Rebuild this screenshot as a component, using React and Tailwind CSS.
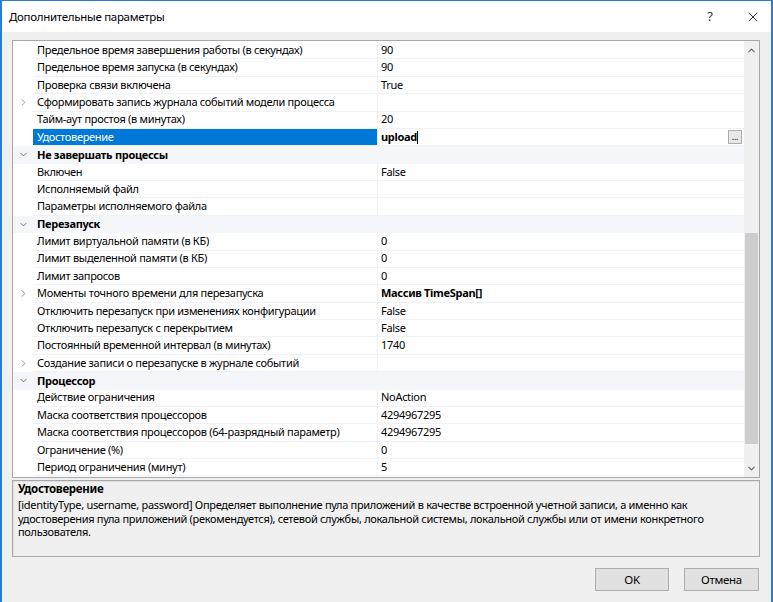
import { ChevronRight, ChevronDown, ChevronUp, X } from 'lucide-react';

const rows = [
  { name: 'Предельное время завершения работы (в секундах)', value: '90' },
  { name: 'Предельное время запуска (в секундах)', value: '90' },
  { name: 'Проверка связи включена', value: 'True' },
  { name: 'Сформировать запись журнала событий модели процесса', value: '', expand: true },
  { name: 'Тайм-аут простоя (в минутах)', value: '20' },
  { name: 'Удостоверение', value: 'upload', selected: true },
  { cat: 'Не завершать процессы' },
  { name: 'Включен', value: 'False' },
  { name: 'Исполняемый файл', value: '' },
  { name: 'Параметры исполняемого файла', value: '' },
  { cat: 'Перезапуск' },
  { name: 'Лимит виртуальной памяти (в КБ)', value: '0' },
  { name: 'Лимит выделенной памяти (в КБ)', value: '0' },
  { name: 'Лимит запросов', value: '0' },
  { name: 'Моменты точного времени для перезапуска', value: 'Массив TimeSpan[]', expand: true, bold: true },
  { name: 'Отключить перезапуск при изменениях конфигурации', value: 'False' },
  { name: 'Отключить перезапуск с перекрытием', value: 'False' },
  { name: 'Постоянный временной интервал (в минутах)', value: '1740' },
  { name: 'Создание записи о перезапуске в журнале событий', value: '', expand: true },
  { cat: 'Процессор' },
  { name: 'Действие ограничения', value: 'NoAction' },
  { name: 'Маска соответствия процессоров', value: '4294967295' },
  { name: 'Маска соответствия процессоров (64-разрядный параметр)', value: '4294967295' },
  { name: 'Ограничение (%)', value: '0' },
  { name: 'Период ограничения (минут)', value: '5' },
];

function Row({ row }) {
  if (row.cat) {
    return (
      <div className="flex h-[17.375px] items-center bg-[#f4f6fa]">
        <div className="w-[20px] shrink-0 flex justify-center text-[#404040]">
          <ChevronDown size={11} strokeWidth={1.6} />
        </div>
        <div className="pl-[4px] font-bold">{row.cat}</div>
      </div>
    );
  }
  return (
    <div className="flex h-[17.375px] items-stretch">
      <div className="w-[20px] shrink-0 flex items-center justify-center text-[#7a7a7a]">
        {row.expand && <ChevronRight size={11} strokeWidth={1.8} />}
      </div>
      <div
        className={`w-[345px] shrink-0 flex items-center pl-[4px] border-r border-b border-[#eef1f6] whitespace-nowrap overflow-hidden ${
          row.selected ? 'bg-[#0078d7] text-white' : ''
        }`}
      >
        {row.name}
      </div>
      <div className="flex-1 flex items-center pl-[3px] border-b border-[#eef1f6] relative">
        {row.selected ? (
          <>
            <span className="font-bold">{row.value}</span>
            <span className="w-px h-[13px] bg-black" />
            <div className="absolute right-[2px] top-[1px] w-[14px] h-[14px] border border-[#adadad] bg-[#e8e8e8] flex items-end justify-center text-[9px] leading-[9px] pb-[2px]">
              ...
            </div>
          </>
        ) : (
          <span className={row.bold ? 'font-bold' : ''}>{row.value}</span>
        )}
      </div>
    </div>
  );
}

export default function App() {
  return (
    <div className="w-[773px] h-[602px] bg-[#f0f0f0] border-l-2 border-r-2 border-t border-[#2b7bd4] flex flex-col font-['Noto_Sans',sans-serif] text-[11px] tracking-[-0.3px] text-black overflow-hidden">
      {/* title bar */}
      <div className="h-[31px] bg-white flex items-center shrink-0 pl-[7px] pr-[10px]">
        <div className="flex-1 text-[11.5px]">Дополнительные параметры</div>
        <div className="w-[30px] text-center text-[13px] mr-[20px] text-[#333]">?</div>
        <X size={16} strokeWidth={1.2} />
      </div>

      <div className="flex-1 flex flex-col pl-[10px] pr-[11px]">
        {/* property grid */}
        <div className="mt-[8px] h-[438px] border border-[#a8a8a8] bg-white flex overflow-hidden">
          <div className="flex-1 flex flex-col pt-px">
            {rows.map((r, i) => (
              <Row key={i} row={r} />
            ))}
          </div>
          <div className="w-[15px] bg-[#f0f0f0] flex flex-col items-center shrink-0">
            <div className="h-[17px] flex items-center text-[#606060] mt-px">
              <ChevronUp size={11} strokeWidth={2.2} />
            </div>
            <div className="h-[174px]" />
            <div className="w-[13px] h-[211px] bg-[#cdcdcd]" />
            <div className="flex-1" />
            <div className="h-[17px] flex items-center text-[#606060]">
              <ChevronDown size={11} strokeWidth={2.2} />
            </div>
          </div>
        </div>

        {/* description */}
        <div className="mt-[2px] h-[77px] border border-[#a8a8a8] shadow-[inset_1px_1px_0_#e0e0e0] px-[5px] leading-[13.5px]">
          <div className="font-bold leading-[16px] text-[11.5px]">Удостоверение</div>
          <div className="mt-[1px]">
            [identityType, username, password] Определяет выполнение пула приложений в качестве встроенной учетной записи, а именно как
            удостоверения пула приложений (рекомендуется), сетевой службы, локальной системы, локальной службы или от имени конкретного
            пользователя.
          </div>
        </div>

        {/* buttons */}
        <div className="mt-[11px] flex justify-end gap-[15px] pr-[1px]">
          <button className="w-[74px] h-[23px] bg-[#e1e1e1] border border-[#adadad] text-[11.5px]">OK</button>
          <button className="w-[75px] h-[23px] bg-[#e1e1e1] border border-[#adadad] text-[11.5px]">Отмена</button>
        </div>
      </div>
    </div>
  );
}
